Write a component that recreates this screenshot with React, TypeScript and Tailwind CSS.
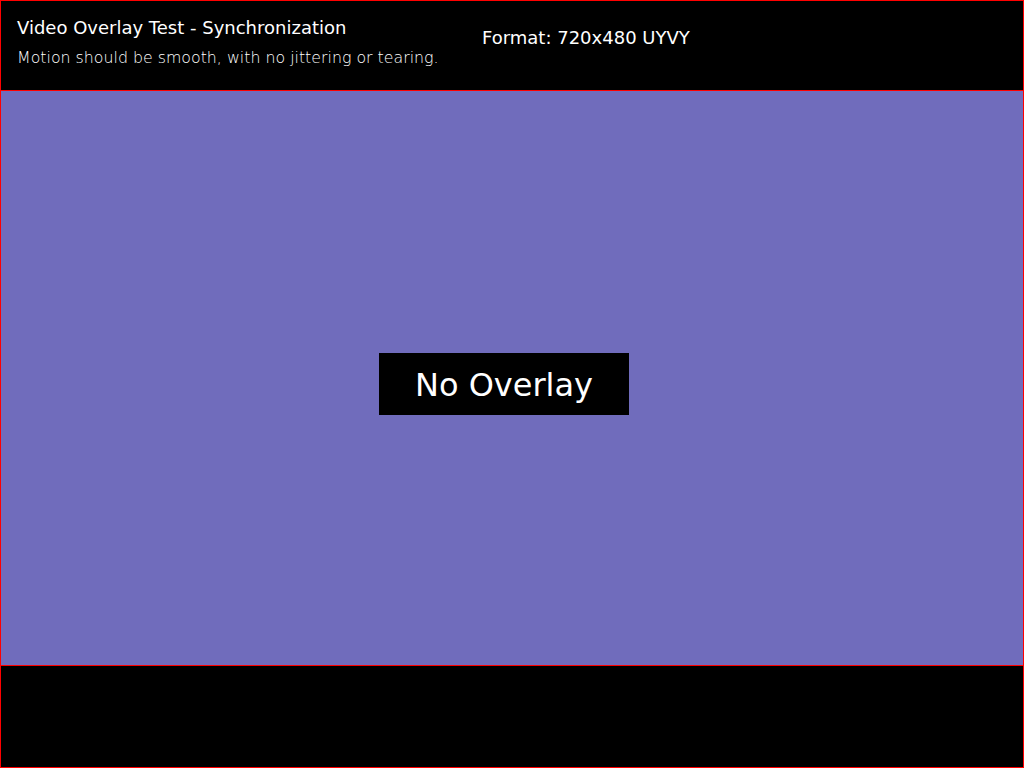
import React from "react";

const font = { fontFamily: '"DejaVu Sans", sans-serif' };

export default function App() {
  return (
    <div
      className="w-[1024px] h-[768px] border border-[#ff0000] bg-black flex flex-col text-white"
      style={font}
    >
      {/* header strip */}
      <div className="h-[90px] shrink-0 border-b border-[#ff0000] flex">
        <div className="pl-4 pt-[15px] w-[481px]">
          <div className="text-[18px] leading-[24px]">
            Video Overlay Test - Synchronization
          </div>
          <div className="text-[15.8px] leading-[22px] mt-[7px] font-extralight">
            Motion should be smooth, with no jittering or tearing.
          </div>
        </div>
        <div className="pt-[25px] text-[18px] leading-[24px]">
          Format: 720x480 UYVY
        </div>
      </div>

      {/* video area */}
      <div className="h-[575px] shrink-0 border-b border-[#ff0000] bg-[#706cbc] pl-[378px] pt-[262px]">
        <div className="w-[250px] h-[62px] pt-[2px] bg-black flex items-center justify-center text-[32px]">
          No Overlay
        </div>
      </div>

      <div className="flex-1" />
    </div>
  );
}
